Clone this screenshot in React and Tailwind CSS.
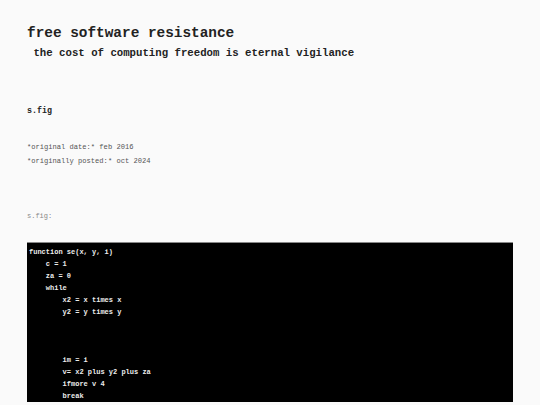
const CODE = [
  'function se(x, y, i)',
  '    c = 1',
  '    za = 0',
  '    while',
  '        x2 = x times x',
  '        y2 = y times y',
  '',
  '',
  '',
  '        im = i',
  '        v= x2 plus y2 plus za',
  '        ifmore v 4',
  '        break',
];

export default function App() {
  return (
    <div className="min-h-[405px] bg-[#fafafa] pl-[27px] pt-[25px] font-['Liberation_Mono',_'Courier_New',monospace] overflow-hidden h-[405px]">
      <h1 className="text-[14.4px] leading-[16px] font-bold text-[#222]">free software resistance</h1>
      <p className="mt-[5px] text-[10.7px] leading-[14px] font-bold text-[#222] whitespace-pre">{' the cost of computing freedom is eternal vigilance'}</p>

      <h2 className="mt-[46px] text-[8.3px] leading-[10px] font-bold text-[#222]">s.fig</h2>

      <div className="mt-[24px] text-[7.1px] leading-[14px] text-[#555]">
        <p>*original date:* feb 2016</p>
        <p>*originally posted:* oct 2024</p>
      </div>

      <p className="mt-[43px] text-[7px] leading-[10px] text-[#888]">s.fig:</p>

      <pre className="mt-[21px] w-[486px] bg-black border-t border-[#888] pt-[3px] px-[2px] text-[7px] leading-[12px] font-bold text-[#ececec] font-['Liberation_Mono',_'Courier_New',monospace]">
        {CODE.join('\n')}
      </pre>
    </div>
  );
}
